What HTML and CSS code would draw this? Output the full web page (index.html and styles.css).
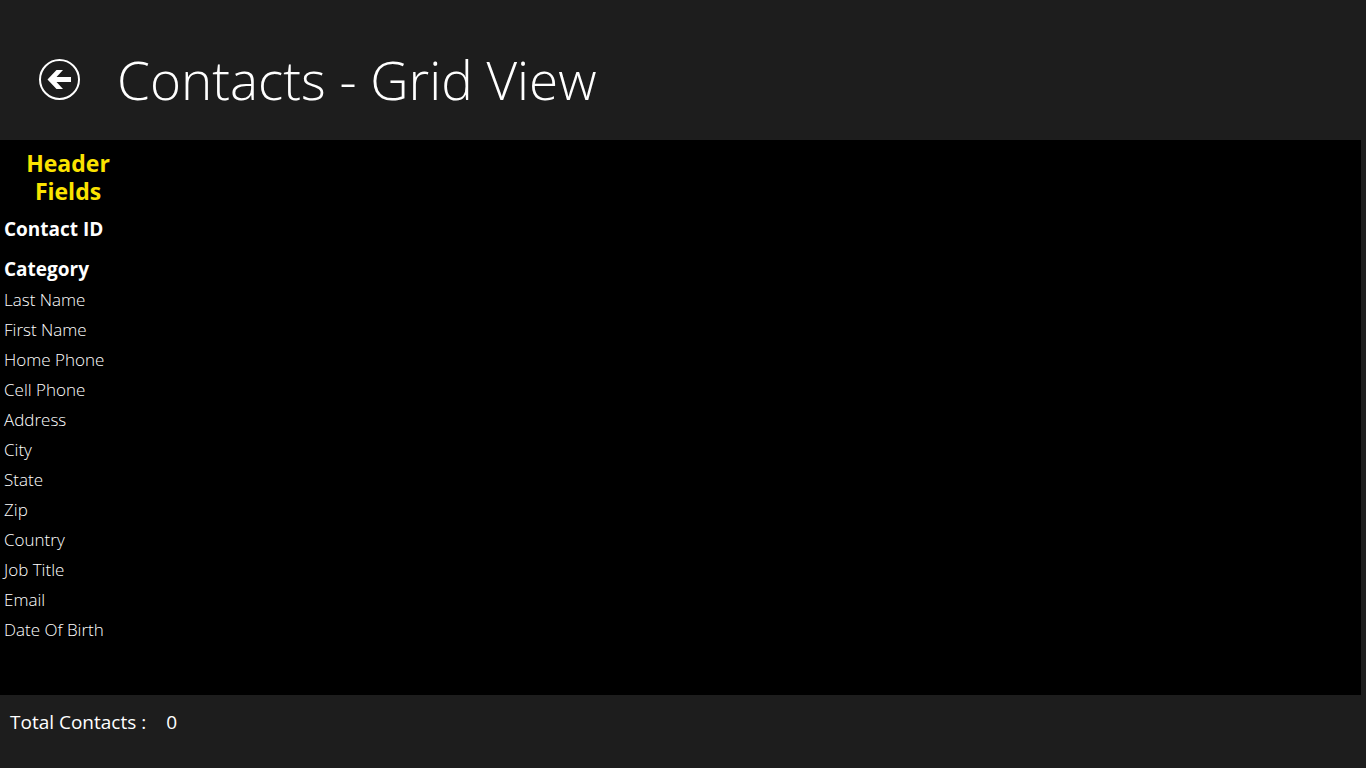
FILE: index.html
```html
<!DOCTYPE html>
<html lang="en">
<head>
    <meta charset="UTF-8">
    <meta name="viewport" content="width=device-width, initial-scale=1.0">
    <title>Contacts - Grid View</title>
    <link rel="stylesheet" href="styles.css">
</head>
<body>
    <header class="header">
        <button type="button" class="back-button" aria-label="Back">
            <svg class="back-icon" viewBox="0 0 41 41" aria-hidden="true">
                <circle cx="20.5" cy="20.5" r="19.5" fill="none" stroke="#fff" stroke-width="2"/>
                <path d="M8.5 20.5 L17.5 11 H24 L17.5 18 H32 V23 H17.5 L24 30 H17.5 Z" fill="#fff"/>
            </svg>
        </button>
        <h1 class="page-title">Contacts - Grid View</h1>
    </header>
    <main class="contacts-grid">
        <section class="field-column">
            <h2 class="column-title">Header Fields</h2>
            <ul class="field-list">
                <li class="field key-field">Contact ID</li>
                <li class="field key-field">Category</li>
                <li class="field">Last Name</li>
                <li class="field">First Name</li>
                <li class="field">Home Phone</li>
                <li class="field">Cell Phone</li>
                <li class="field">Address</li>
                <li class="field">City</li>
                <li class="field">State</li>
                <li class="field">Zip</li>
                <li class="field">Country</li>
                <li class="field">Job Title</li>
                <li class="field">Email</li>
                <li class="field">Date Of Birth</li>
            </ul>
        </section>
    </main>
    <footer class="footer">
        <span>Total Contacts :</span>
        <span>0</span>
    </footer>
</body>
</html>
```

FILE: styles.css
```css
* {
    box-sizing: border-box;
}

body {
    display: flex;
    flex-direction: column;
    min-height: 100vh;
    margin: 0;
    background-color: #1d1d1d;
    color: #fff;
    font-family: "Segoe UI", "Open Sans", sans-serif;
}

.header {
    display: flex;
    align-items: center;
    gap: 37px;
    height: 140px;
    padding: 19px 39px 0;
}

.back-button {
    width: 41px;
    height: 41px;
    padding: 0;
    border: none;
    border-radius: 50%;
    background: none;
    cursor: pointer;
}

.back-icon {
    display: block;
    width: 41px;
    height: 41px;
}

.page-title {
    margin: 0;
    font-size: 53px;
    font-weight: 300;
    line-height: 63px;
}

.contacts-grid {
    flex: 1;
    margin-right: 5px;
    padding: 9px 0;
    background-color: #000;
}

.field-column {
    width: 136px;
}

.column-title {
    margin: 0;
    padding: 0 20px;
    color: #fbe300;
    font-size: 23px;
    font-weight: 700;
    line-height: 28px;
    text-align: center;
}

.field-list {
    margin: 0;
    padding: 0 4px;
    list-style: none;
}

.field {
    font-size: 17px;
    font-weight: 300;
    line-height: 30px;
}

.key-field {
    font-size: 19px;
    font-weight: 700;
    padding-top: 8px;
    line-height: 32px;
}

.footer {
    display: flex;
    gap: 20px;
    padding: 12px 10px 31px;
    font-size: 19px;
    line-height: 30px;
}
```
